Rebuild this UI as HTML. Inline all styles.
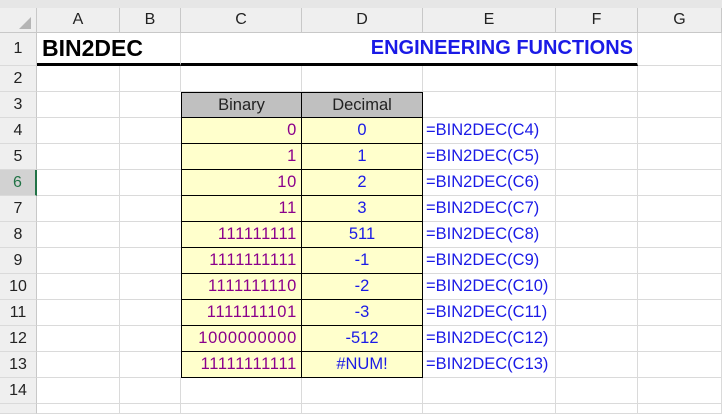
<!DOCTYPE html>
<html><head><style>
*{margin:0;padding:0;box-sizing:border-box}
body{width:722px;height:408px;overflow:hidden;background:#fff;font-family:"Liberation Sans",Arial,sans-serif;position:relative}
.top{position:absolute;left:0;top:0;width:722px;height:8px;background:#e6e6e6}
.row{position:absolute;left:0;display:flex}
.c{border-right:1px solid #dadada;border-bottom:1px solid #dadada;height:100%;font-size:16.5px;display:flex;align-items:center;overflow:visible;white-space:nowrap}
.h{background:#efefef;border-color:#c8c8c8;justify-content:center;color:#222;font-size:16px}
.rh{background:#efefef;border-right:1px solid #c8c8c8;border-bottom:1px solid #dadada;justify-content:center;color:#222;font-size:16px}
.w0{width:37px}.wA{width:83px}.wB{width:61px}.wC{width:121px}.wD{width:121px}.wE{width:133px}.wF{width:82px}.wG{width:84px}
.bin{background:#ffffcc;border:1px solid #000;border-top:none;justify-content:flex-end;padding-right:4px;color:#8b008b;font-size:16.5px;letter-spacing:0.7px}
.dec{background:#ffffcc;border:1px solid #000;border-top:none;border-left:none;justify-content:center;color:#1a1ae6}
.f{color:#1a1ae6;padding-left:3px}
</style></head><body>
<div class="top"></div>
<div class="row" style="top:8px;height:25px">
<div class="c h w0" style="background:#efefef"><svg width="14" height="14" style="margin:6px 0 0 14px"><polygon points="13,1 13,13 1,13" fill="#b5b5b5"/></svg></div>
<div class="c h wA">A</div><div class="c h wB">B</div><div class="c h wC">C</div><div class="c h wD">D</div><div class="c h wE">E</div><div class="c h wF">F</div><div class="c h wG">G</div></div>

<div class="row" style="top:33px;height:33px">
<div class="c rh w0">1</div>
<div class="c wA" style="border-right:none;border-bottom:3px solid #000;font-weight:bold;font-size:23px;padding-left:5px">BIN2DEC</div>
<div class="c wB" style="border-bottom:3px solid #000"></div>
<div class="c wC" style="border-right:none;border-bottom:3px solid #000"></div>
<div class="c wD" style="border-right:none;border-bottom:3px solid #000"></div>
<div class="c wE" style="border-right:none;border-bottom:3px solid #000"></div>
<div class="c wF" style="border-bottom:3px solid #000;position:relative"><span style="position:absolute;right:4px;font-weight:bold;font-size:20px;color:#1a1ae6">ENGINEERING FUNCTIONS</span></div>
<div class="c wG"></div></div>

<div class="row" style="top:66px;height:26px"><div class="c rh w0">2</div><div class="c wA"></div><div class="c wB"></div><div class="c wC"></div><div class="c wD"></div><div class="c wE"></div><div class="c wF"></div><div class="c wG"></div></div>

<div class="row" style="top:92px;height:26px"><div class="c rh w0">3</div><div class="c wA"></div><div class="c wB" style="border-right:none"></div>
<div class="c wC" style="background:#c0c0c0;border:1px solid #000;justify-content:center;color:#222">Binary</div>
<div class="c wD" style="background:#c0c0c0;border:1px solid #000;border-left:none;justify-content:center;color:#222">Decimal</div>
<div class="c wE"></div><div class="c wF"></div><div class="c wG"></div></div>

<div class="row" style="top:118px;height:26px"><div class="c rh w0">4</div><div class="c wA"></div><div class="c wB" style="border-right:none"></div><div class="c wC bin">0</div><div class="c wD dec">0</div><div class="c wE f">=BIN2DEC(C4)</div><div class="c wF"></div><div class="c wG"></div></div>
<div class="row" style="top:144px;height:26px"><div class="c rh w0">5</div><div class="c wA"></div><div class="c wB" style="border-right:none"></div><div class="c wC bin">1</div><div class="c wD dec">1</div><div class="c wE f">=BIN2DEC(C5)</div><div class="c wF"></div><div class="c wG"></div></div>
<div class="row" style="top:170px;height:26px"><div class="c rh w0" style="background:#d2d2d2;border-right:2px solid #217346;color:#217346">6</div><div class="c wA"></div><div class="c wB" style="border-right:none"></div><div class="c wC bin">10</div><div class="c wD dec">2</div><div class="c wE f">=BIN2DEC(C6)</div><div class="c wF"></div><div class="c wG"></div></div>
<div class="row" style="top:196px;height:26px"><div class="c rh w0">7</div><div class="c wA"></div><div class="c wB" style="border-right:none"></div><div class="c wC bin">11</div><div class="c wD dec">3</div><div class="c wE f">=BIN2DEC(C7)</div><div class="c wF"></div><div class="c wG"></div></div>
<div class="row" style="top:222px;height:26px"><div class="c rh w0">8</div><div class="c wA"></div><div class="c wB" style="border-right:none"></div><div class="c wC bin">111111111</div><div class="c wD dec">511</div><div class="c wE f">=BIN2DEC(C8)</div><div class="c wF"></div><div class="c wG"></div></div>
<div class="row" style="top:248px;height:26px"><div class="c rh w0">9</div><div class="c wA"></div><div class="c wB" style="border-right:none"></div><div class="c wC bin">1111111111</div><div class="c wD dec">-1</div><div class="c wE f">=BIN2DEC(C9)</div><div class="c wF"></div><div class="c wG"></div></div>
<div class="row" style="top:274px;height:26px"><div class="c rh w0">10</div><div class="c wA"></div><div class="c wB" style="border-right:none"></div><div class="c wC bin">1111111110</div><div class="c wD dec">-2</div><div class="c wE f">=BIN2DEC(C10)</div><div class="c wF"></div><div class="c wG"></div></div>
<div class="row" style="top:300px;height:26px"><div class="c rh w0">11</div><div class="c wA"></div><div class="c wB" style="border-right:none"></div><div class="c wC bin">1111111101</div><div class="c wD dec">-3</div><div class="c wE f">=BIN2DEC(C11)</div><div class="c wF"></div><div class="c wG"></div></div>
<div class="row" style="top:326px;height:26px"><div class="c rh w0">12</div><div class="c wA"></div><div class="c wB" style="border-right:none"></div><div class="c wC bin">1000000000</div><div class="c wD dec">-512</div><div class="c wE f">=BIN2DEC(C12)</div><div class="c wF"></div><div class="c wG"></div></div>
<div class="row" style="top:352px;height:26px"><div class="c rh w0">13</div><div class="c wA"></div><div class="c wB" style="border-right:none"></div><div class="c wC bin">11111111111</div><div class="c wD dec">#NUM!</div><div class="c wE f">=BIN2DEC(C13)</div><div class="c wF"></div><div class="c wG"></div></div>
<div class="row" style="top:378px;height:26px"><div class="c rh w0">14</div><div class="c wA"></div><div class="c wB"></div><div class="c wC"></div><div class="c wD"></div><div class="c wE"></div><div class="c wF"></div><div class="c wG"></div></div>
<div class="row" style="top:404px;height:10px"><div class="c rh w0"></div><div class="c wA"></div><div class="c wB"></div><div class="c wC"></div><div class="c wD"></div><div class="c wE"></div><div class="c wF"></div><div class="c wG"></div></div>
</body></html>
